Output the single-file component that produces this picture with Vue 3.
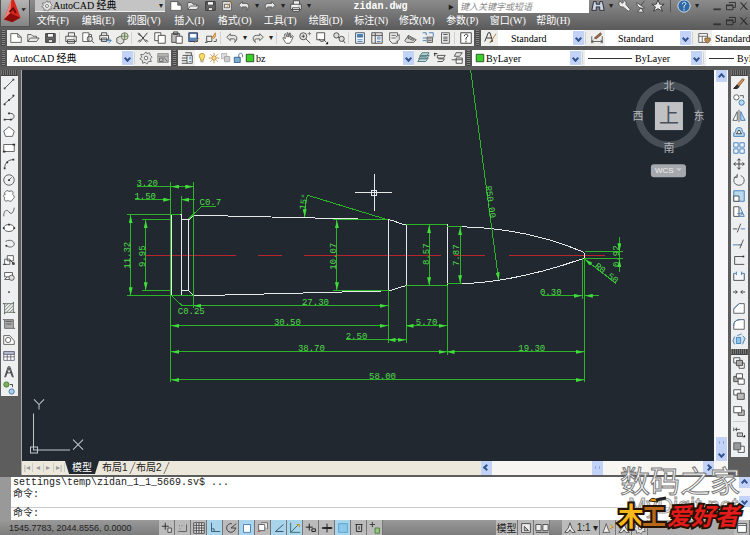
<script setup>
import { ref, h } from 'vue'

const blue = '#3f79b5'
const pale = '#b9d9ee'

// every icon is a list of [d, stroke, fill] on a 16x16 grid
const icons = {
  new: [['M2 3H10L14 7V13H2ZM10 3V7H14', '#555', '#fff']],
  open: [['M2 12V4H6L8 6H12V8M2 12L5 8H15L12 12Z', '#555', '#e8e8e8']],
  save: [['M3 3H14V13H3Z', '#333', '#666'], ['M5 3H12V7H5ZM6 10H11V13H6Z', '#333', '#fff']],
  edit: [['M3 3H13V13H3ZM5 6H11V10H5Z', '#555', '#eee'], ['M7 10L14 2', '#d08a20']],
  print: [['M5 6V2H12V6M2 6H14V12H2ZM4 10H12V14H4Z', '#444', '#f2f2f2'], ['M11 8H12', '#444']],
  preview: [['M2 2H9V12H2ZM9 4H12V7', '#555', '#fff'], ['M13 9A3 3 0 1 1 7 9A3 3 0 1 1 13 9M12 11L15 14', '#444']],
  publish: [['M4 5V2H10V5M2 5H12V10H2ZM4 8H10V12H4Z', '#444', '#eee'], ['M9 11H15M12 8L15 11L12 14', blue]],
  globe: [['M2 8L6 6L10 8V13L6 15L2 13Z', '#555', '#ddd'], ['M15 6A4 4 0 1 1 7 6A4 4 0 1 1 15 6M11 2V10M7 6H15', '#65755a', '#d3dfbf']],
  cut: [['M3 2L12 13M13 2L4 13M2 3L6 6', '#222'], ['M2 12L5 10M11 10L14 12', '#444']],
  copy: [['M2 2H9V11H2Z', '#444', '#fff'], ['M6 5H14V14H6Z', '#444', '#fff']],
  paste: [['M2 3H11V13H2ZM4 1H9V4H4Z', '#444', '#bbb'], ['M7 6H14V14H7Z', '#444', '#fff']],
  match: [['M2 2H12V12H2Z', '#335', '#5b86b8'], ['M4 4H10V7H4Z', '#fff', '#fff'], ['M8 14L14 8', '#c47b20']],
  block: [['M3 6H9V12H3ZM1 13H4M11 12H14V9', '#444', '#eee'], ['M9 8L13 2V6L11 9', '#c58432', '#e7b671']],
  undo: [['M6 3L2 7L6 11V9H10C12 9 12 11 11 13C15 10 14 5 10 5H6Z', '#555', '#e6e6e6']],
  redo: [['M10 3L14 7L10 11V9H6C4 9 4 11 5 13C1 10 2 5 6 5H10Z', '#555', '#e6e6e6']],
  pan: [['M5 13L2 8L3 7L5 9L4 4L5 3L7 7V2H8L9 7L10 2L11 3V8L13 5L14 6L12 11L10 14H6Z', '#555', '#fff']],
  zoom: [['M10 6A4 4 0 1 1 2 6A4 4 0 1 1 10 6M9 9L14 14M6 4V8M4 6H8', '#444', '#e8e8e8'], ['M11 3H15M13 1V5', '#777']],
  zoomWindow: [['M2 2H11V10H2Z', '#444', '#fff'], ['M11 9A3 3 0 1 1 5 9M10 10L13 13', '#444'], ['M12 15H15V12Z', 'none', '#111']],
  zoomPrev: [['M8 5A3 3 0 1 1 2 5A3 3 0 1 1 8 5M7 7L9 9', '#444', '#ddd'], ['M14 9A3 3 0 1 1 8 9A3 3 0 1 1 14 9M13 11L15 14', '#444', '#ddd']],
  props: [['M3 2H13V14H3Z', '#345', '#fff'], ['M5 4H11V7H5Z', blue, '#5278a4'], ['M5 10H11M5 12H11', blue]],
  center: [['M2 2H14V14H2ZM6 2V14M2 5H14', '#444', '#eee'], ['M8 7H12M8 9H12M8 12H12', blue]],
  palette: [['M3 2H12V14H6L3 11ZM5 5H10M5 8H10', '#555', '#eee'], ['M10 7L14 4V10L10 13', '#666', '#ddd']],
  sheet: [['M1 11L5 5L14 10L11 13H3Z', '#555', '#ddd'], ['M4 8L11 11M6 7L12 10M5 5V9', '#555']],
  markup: [['M2 2H6V5M9 2H14V7M2 8H7M2 11H6', blue], ['M7 7H13V13H7Z', '#444', '#e5e5e5'], ['M8 9H12M8 11H12', '#555']],
  calc: [['M4 2H13V14H4Z', '#555', '#eee'], ['M6 4H11M6 7H11M6 9H11M6 11H11', '#444']],
  help: [['M2 2H14V14H2Z', '#333', '#fff'], ['M6 6C6 3 11 3 10 6L8 8V10M8 11V13', '#222']],
  textStyle: [['M2 12L6 2H8L11 12M4 8H10', '#222'], ['M9 12L15 3', '#b57728'], ['M7 14L10 10L11 12Z', 'none', '#6d4724']],
  dimStyle: [['M2 6V14M14 6V14M2 12H14M4 10L2 12L4 14M12 10L14 12L12 14', '#555'], ['M5 8L12 2L13 4L7 9Z', '#754d35', '#996a48']],
  tableStyle: [['M2 3H12V13H2ZM2 6H12M6 6V13', '#555', '#fff'], ['M9 8H15V11L12 14L9 11Z', '#7d5a35', '#b78b55']],
  gear: [['M8 1L9 3L12 2L13 5L15 7L13 9L14 12L11 12L9 15L7 13L4 14L4 11L1 9L3 7L2 4L5 4Z', '#666', '#e3e3e3'], ['M10 8A2 2 0 1 1 6 8A2 2 0 1 1 10 8', '#666', '#fff']],
  workspace: [['M2 3H14V13H2ZM2 6H14', '#888', '#bbb'], ['M4 8H8V12H4ZM9 7L13 12', '#666']],
  layers: [['M6 2H13V5M3 5H9M2 8H8M2 11H8M2 14H8', '#444'], ['M8 5H14V14H8Z', '#444', '#fff'], ['M10 7H13M10 9H13M10 12H13', blue]],
  bulb: [['M8 2C3 2 4 7 6 9V11H10V9C12 7 13 2 8 2Z', '#a77e1d', '#f9dd68'], ['M6 13H10', '#666']],
  sun: [['M8 1V4M8 12V15M1 8H4M12 8H15M3 3L5 5M11 11L13 13M13 3L11 5M3 13L5 11', '#b27c29'], ['M11 8A3 3 0 1 1 5 8A3 3 0 1 1 11 8', '#a96b1f', '#ffe18c']],
  frozen: [['M2 2H9V9H2Z', '#aaa', '#ddd'], ['M6 6H13V13H6Z', '#999', '#ccc']],
  lock: [['M9 7V4C9 1 14 1 14 4V7', '#385a80'], ['M3 7H11V14H3Z', '#234b70', '#7cacd1']],
  green: [['M3 3H13V13H3Z', '#172b11', '#3ad02b']],
  layerA: [['M2 12L5 8H14L11 12ZM3 9L6 5H15L12 9ZM4 6L7 2H15L12 6Z', '#466f75', '#c2dcdf']],
  layerB: [['M5 5H14L12 8H5ZM6 9H13L11 12H5', '#444', '#eee'], ['M2 2V6M1 3H5', '#222']],
  layerC: [['M7 2H14L11 6H5ZM2 10H9', '#444', '#eee'], ['M7 8H14V14H7ZM7 10H14', '#444', '#fff']],
  line: [['M3 13L13 3', '#444'], ['M2 12H4V14H2ZM12 2H14V4H12Z', 'none', '#444']],
  xline: [['M2 13L14 3', '#444'], ['M2 12H4V14H2ZM7 7H9V9H7ZM12 2H14V4H12Z', 'none', '#333']],
  pline: [['M3 12H10C15 12 15 5 10 5H8', '#444'], ['M2 11H4V13H2ZM7 4H9V6H7ZM9 11H11V13H9Z', 'none', '#333']],
  polygon: [['M8 2L14 7L12 13H4L2 7Z', '#555', '#fff']],
  rect: [['M2 4H14V12H2Z', '#555', '#fff'], ['M1 11H4V13H1ZM12 3H15V5H12Z', 'none', '#333']],
  arc: [['M3 13C3 7 7 3 13 3', '#444'], ['M2 12H4V14H2ZM5 5H7V7H5ZM12 2H14V4H12Z', 'none', '#333']],
  circle: [['M14 8A6 6 0 1 1 2 8A6 6 0 1 1 14 8M8 8L11 5', '#555'], ['M7 7H9V9H7Z', 'none', '#333']],
  cloud: [['M4 3C6 1 8 2 8 3C11 1 14 3 12 6C15 8 14 11 12 12C11 15 8 14 7 13C4 15 2 13 3 10C1 8 2 6 4 6C2 5 3 4 4 3', '#555', '#fff']],
  spline: [['M2 13C2 5 6 5 8 8S13 10 14 3', '#555']],
  ellipse: [['M14 8A6 4 0 1 1 2 8A6 4 0 1 1 14 8', '#555', '#fff'], ['M1 7H3V9H1ZM7 3H9V5H7ZM13 7H15V9H13Z', 'none', '#333']],
  earc: [['M4 5C10 2 14 5 14 8C14 11 9 13 5 10', '#555'], ['M4 9H6V11H4Z', 'none', '#333']],
  insert: [['M6 3H13V9H6ZM3 7H9V13H3Z', '#555', '#fff'], ['M9 8L14 13M1 13H5M12 11H14V13H12Z', '#333']],
  make: [['M3 4H12V9H3ZM6 9L3 12H9', '#555', '#fff'], ['M14 10A3 3 0 1 1 8 10A3 3 0 1 1 14 10', '#555', '#ddd']],
  point: [['M7 7H9V9H7Z', 'none', '#555']],
  hatch: [['M3 3H13V13H3ZM3 7L7 3M3 11L11 3M5 13L13 5M9 13L13 9', '#667567'], ['M1 3H3M13 1V3M13 13H15M3 13V15', '#333']],
  gradient: [['M3 3H13V13H3Z', '#666', '#aaa'], ['M4 5H12M5 8H11M1 3H3M13 13H15', '#555']],
  region: [['M2 3H9L14 9V13H2Z', '#555', '#fff'], ['M10 8A3 3 0 1 1 4 8A3 3 0 1 1 10 8', '#555']],
  table: [['M2 3H14V13H2ZM2 6H14M2 9H14M6 3V13M10 3V13', '#667', '#fff'], ['M2 3H14V6H2Z', '#667', '#bcc8d8']],
  text: [['M3 14L7 2H9L13 14M5 9H11M4 14L8 3L12 14', '#333']],
  add: [['M8 4A3 3 0 1 1 2 4A3 3 0 1 1 8 4', '#427a35', '#7eae5e'], ['M14 12A3 3 0 1 1 8 12A3 3 0 1 1 14 12', '#426f97', '#a9d1ed'], ['M9 4H12V7', '#333']],
  erase: [['M2 13H6L14 3L12 2Z', '#88512d', '#d49760'], ['M2 13L6 9L8 11L6 13Z', '#222', '#333']],
  copyObj: [['M8 5A3 3 0 1 1 2 5A3 3 0 1 1 8 5', '#555', '#fff'], ['M14 11A3 3 0 1 1 8 11A3 3 0 1 1 14 11', blue, pale], ['M9 3H13V6', '#555']],
  mirror: [['M1 13L6 3V13Z', '#555', '#fff'], ['M15 13L10 3V13Z', blue, pale], ['M8 1V15', '#555']],
  offset: [['M2 9C6 9 2 3 8 3S10 9 14 9V13H2Z', blue, pale], ['M5 10C7 9 6 6 8 6S9 9 11 10Z', '#333', '#fff']],
  array: [['M2 2H7V7H2ZM9 2H14V7H9ZM2 9H7V14H2ZM9 9H14V14H9Z', blue, '#edf7fd']],
  move: [['M8 2V14M2 8H14M6 4L8 2L10 4M6 12L8 14L10 12M4 6L2 8L4 10M12 6L14 8L12 10', '#333']],
  rotate: [['M6 3C0 5 1 14 8 14S16 5 10 3M6 1V5H2', '#555']],
  scale: [['M2 2H14V14H2Z', blue, pale], ['M2 8H8V14H2Z', '#444', '#fff']],
  stretch: [['M2 2H8V13H2Z', '#444', '#fff'], ['M9 2L14 13H8M6 10H12L10 8M12 10L10 12', blue]],
  trim: [['M1 9H6M6 13L10 3', '#444'], ['M10 9H15', blue]],
  extend: [['M1 9H7', blue], ['M9 13L13 3M7 9H11', '#444']],
  breakAt: [['M13 4H3V13H14', '#444'], ['M12 3H14V5H12Z', 'none', '#333']],
  breakIt: [['M2 5V13H14V5', '#444', '#f5f9fc'], ['M2 5H5M11 5H14M5 3V7M11 3V7', blue]],
  join: [['M1 8H6M10 8H15M4 6L6 8L4 10M12 6L10 8L12 10', '#333']],
  chamfer: [['M2 14V9L8 3H14V14Z', '#555', '#fff'], ['M2 9L8 3', blue]],
  fillet: [['M2 14V10C2 5 5 3 10 3H14V14Z', '#555', '#fff'], ['M2 10C2 5 5 3 10 3', blue]],
  explode: [['M5 5H10V12H5Z', blue, '#8cc5e8'], ['M3 4L1 9L3 13M12 3L15 6L12 13M6 3L11 1', blue, pale]],
  orderA: [['M2 2H9V8H2ZM8 8H14V14H8Z', '#444', '#fff'], ['M5 5H12V11H5Z', '#444', '#aaa']],
  orderB: [['M2 5H9V11H2Z', '#444', '#aaa'], ['M5 2H12V7H5ZM7 8H14V14H7Z', '#444', '#fff']],
  orderC: [['M2 2H10V8H2Z', '#444', '#fff'], ['M6 6H14V13H6Z', '#444', '#bbb']],
  orderD: [['M7 7H14V13H7Z', '#444', '#bbb'], ['M2 3H11V10H2Z', '#444', '#fff']],
  orderE: [['M2 3V7M5 3V7M3 5H9M6 9H12V13H6Z', '#444', '#ccc'], ['M12 14H15V11Z', 'none', '#111']],
  orderF: [['M7 6H14V13H7Z', '#444', '#fff'], ['M2 2H10V10H2Z', '#555', '#999']],
  binoculars: [['M3 3H6V6H10V3H13L15 13H10V9H6V13H1Z', '#223', '#ccd5e2']],
  wrench: [['M3 2L6 5L8 3L6 1C10 1 11 4 10 6L15 12L13 14L7 9C3 10 1 6 3 2Z', '#555', '#eee']],
  dish: [['M3 4C3 9 8 12 12 10ZM8 7L12 2M8 10L4 15H11Z', '#444', '#eee']],
  star: [['M8 1L10 6H15L11 9L13 14L8 11L3 14L5 9L1 6H6Z', '#333', '#eee']],
  info: [['M15 8A7 7 0 1 1 1 8A7 7 0 1 1 15 8', '#dce8f4', '#2e69a7'], ['M6 6C6 3 11 3 10 6L8 8V10M8 11V13', '#fff']],
  min: [['M3 11H12M3 12H12', '#222']],
  restore: [['M6 3H14V9H11M3 6H11V12H3ZM3 7H11', '#222']],
  close: [['M4 3L12 12M12 3L4 12M5 3L13 12', '#222']],
  infer: [['M2 6H10M6 2V10', '#222'], ['M9 8H13V13H9Z', '#444', '#ddd']],
  snap: [['M4 12H12V4', '#555'], ['M2 12H4M4 5V6M7 5V6M4 9H5', '#666']],
  grid: [['M2 2H14V14H2ZM5 2V14M8 2V14M11 2V14M2 5H14M2 8H14M2 11H14', '#444', '#eee']],
  ortho: [['M4 2V12H14M4 9H7V12', '#356']],
  polar: [['M13 8A5 5 0 1 1 9 3M8 8L14 3M8 8H14', '#333']],
  osnap: [['M4 4H12V13H4Z', blue, '#fff']],
  osnap3: [['M3 4H10V11H3ZM6 2H13V9', '#555', '#fff'], ['M2 12H5', '#c44']],
  track: [['M13 4L4 12H13', '#345']],
  ducs: [['M3 2V13H14M3 13L12 4', '#366'], ['M10 4H13V7', '#b98d25', '#e7c34f']],
  dyn: [['M2 7H10M6 3V11M9 9H13V12H9Z', '#111']],
  weight: [['M2 8H14M8 3V13M8 8H14', '#111'], ['M3 7H13V9H3Z', 'none', '#222']],
  transp: [['M3 3H13V13H3Z', '#58a0cc', '#8cc8e9']],
  quick: [['M4 4H12M5 4V12H11V4M8 6V10', '#222']],
  cycle: [['M2 4H8M5 1V7', '#333'], ['M8 8H13V14H8Z', '#487b37', '#99c683']],
  layout: [['M3 3H13V13H3ZM6 6V11H11Z', '#444', '#eee']],
  views: [['M1 4H7V11H1ZM9 4H15V11H9ZM1 13H15', '#444', '#eee']],
  scaleA: [['M8 2L6 8L2 13H6L8 10L10 13H14L10 8Z', '#444', '#eee']],
  scaleB: [['M6 3L4 9L2 13H10L8 9Z', '#555', '#eee'], ['M11 4L14 7L10 9', '#b18325', '#efc761']],
  screen: [['M3 3H13V13H3ZM3 5H13', '#444', '#fff']]
}

const Icon = (props) =>
  h('svg', { class: 'icon', viewBox: '0 0 16 16', 'aria-hidden': 'true' },
    icons[props.name].map(([d, stroke, fill]) => h('path', { d, stroke, fill: fill || 'none' })))
Icon.props = ['name']

const menus = ['文件(F)', '编辑(E)', '视图(V)', '插入(I)', '格式(O)', '工具(T)', '绘图(D)', '标注(N)', '修改(M)', '参数(P)', '窗口(W)', '帮助(H)']
const quickTools = ['new', 'open', 'save', 'edit', 'undo', '>', 'redo', '>', 'print', '>']
const standardTools = [
  'new', 'open', 'save', '|', 'print', 'preview', 'publish', 'globe', '|',
  'cut', 'copy', 'paste', 'match', 'block', '|', 'undo', '>', 'redo', '>', '|',
  'pan', 'zoom', 'zoomWindow', 'zoomPrev', '|',
  'props', 'center', 'palette', 'sheet', 'markup', 'calc', '|', 'help'
]
const drawTools = ['line', 'xline', 'pline', 'polygon', 'rect', 'arc', 'circle', 'cloud', 'spline', 'ellipse', 'earc', 'insert', 'make', 'point', 'hatch', 'gradient', 'region', 'table', 'text', 'add']
const modifyTools = ['erase', 'copyObj', 'mirror', 'offset', 'array', 'move', 'rotate', 'scale', 'stretch', 'trim', 'extend', 'breakAt', 'breakIt', 'join', 'chamfer', 'fillet', 'explode']
const orderTools = ['orderA', 'orderB', 'orderC', 'orderD', '|', 'orderE', 'orderF']

const statusTools = ref([
  { name: 'infer', on: false }, { name: 'snap', on: false }, { name: 'grid', on: false },
  { name: 'ortho', on: true }, { name: 'polar', on: false }, { name: 'osnap', on: true },
  { name: 'osnap3', on: false }, { name: 'track', on: true }, { name: 'ducs', on: true },
  { name: 'dyn', on: false }, { name: 'weight', on: false }, { name: 'transp', on: true },
  { name: 'quick', on: false }, { name: 'cycle', on: false }
])

const tabs = ['模型', '布局1', '布局2']
const activeTab = ref('模型')
const command = ref('')

// dimension lines with an arrow at both ends
const dims = [
  'M171 186.5H193', 'M130.5 215V295', 'M145.5 220V290', 'M336.5 220V290',
  'M428.5 225V285', 'M459.5 227V283', 'M193 305.5H387', 'M171 325.5H387',
  'M405 325.5H446', 'M387 339.5H405', 'M171 351.5H446', 'M446 351.5H583', 'M171 379.5H583'
]
// arrow only at the end
const leaders = [
  'M135 199.5H171', 'M195 199.5H181', 'M470 70L498 280', 'M541 295.5H581',
  'M598 295.5H584', 'M618.5 237V251', 'M618.5 272V259', 'M615 283L584 259', 'M307 195Q304 205 304.5 217'
]
const extensions = [
  'M137 186.5H171', 'M170.5 182V382', 'M193.5 182V308', 'M181.5 196V214',
  'M127 214.5H180', 'M127 295.5H193', 'M142 219.5H171', 'M142 290.5H171',
  'M216 206.5H201L188 219', 'M171 295L182 305.5H193', 'M307 195L387 219.5',
  'M333 219.5H387', 'M333 290.5H387', 'M387.5 290V343', 'M405.5 285V343', 'M446.5 285V355',
  'M405 224.5H446', 'M405 285.5H446', 'M446 226.5H461', 'M446 283.5H461',
  'M346 339.5H387', 'M581.5 258V299', 'M583.5 258V382', 'M584 251.5H622', 'M584 258.5H622', 'M618.5 251V259'
]
const labels = [
  { t: '3.20', x: 147, y: 186 }, { t: '1.50', x: 145, y: 199 }, { t: 'C0.7', x: 210, y: 205 },
  { t: '27.30', x: 315, y: 305 }, { t: 'C0.25', x: 191, y: 314 }, { t: '30.50', x: 287, y: 325 },
  { t: '2.50', x: 356, y: 339 }, { t: '38.70', x: 311, y: 351 }, { t: '58.00', x: 382, y: 379 },
  { t: '5.70', x: 426, y: 325 }, { t: '19.30', x: 531, y: 351 }, { t: '0.30', x: 550, y: 295 },
  { t: '11.32', x: 130, y: 255, r: -90 }, { t: '9.95', x: 145, y: 256, r: -90 },
  { t: '10.07', x: 336, y: 256, r: -90 }, { t: '8.57', x: 428, y: 254, r: -90 },
  { t: '7.87', x: 458, y: 255, r: -90 }, { t: '0.92', x: 618, y: 256, r: -90 },
  { t: '15°', x: 306, y: 202, r: -80 }, { t: 'R50.00', x: 487, y: 202, r: 82 }, { t: 'R0.50', x: 604, y: 275, r: 38 }
]
</script>

<template>
  <div class="app">
    <header class="header">
      <button class="app-button" aria-label="应用程序菜单">
        <svg viewBox="0 0 30 28" class="app-logo">
          <path d="M3 21L11 0H14L21 19L12 16Z" fill="#d9261c" />
          <path d="M3 21L11 0L10 14Z" fill="#f08078" />
          <path d="M3 21L10 14L21 19L12 24Z" fill="#8e0d0b" />
          <path d="M9 13L13 9L16 14" fill="none" stroke="#6c0808" stroke-width="2" />
          <path d="M22 9H27L24 12Z" fill="#222" />
        </svg>
      </button>
      <div class="header-rows">
        <div class="title-row">
          <div class="combo title-combo">
            <Icon name="gear" />
            <select aria-label="工作空间"><option>AutoCAD 经典</option></select>
            <span class="caret">▾</span>
          </div>
          <template v-for="(tool, i) in quickTools" :key="i">
            <span v-if="tool === '>'" class="more">▾</span>
            <button v-else class="tool" :aria-label="tool"><Icon :name="tool" /></button>
          </template>
          <h1 class="title">zidan.dwg</h1>
          <span class="play">▶</span>
          <input class="search" aria-label="搜索" placeholder="键入关键字或短语" />
          <button class="tool" aria-label="搜索"><Icon name="binoculars" /></button>
          <span class="more">▾</span>
          <button class="tool" aria-label="速博"><Icon name="wrench" /></button>
          <button class="tool" aria-label="通讯中心"><Icon name="dish" /></button>
          <button class="tool" aria-label="收藏夹"><Icon name="star" /></button>
          <span class="sep dark"></span>
          <button class="tool" aria-label="帮助"><Icon name="info" /></button>
          <span class="more">▾</span>
          <div class="window-buttons">
            <button v-for="n in ['min', 'restore', 'close']" :key="n" :aria-label="n"><Icon :name="n" /></button>
          </div>
        </div>
        <div class="menu-row">
          <nav class="menus">
            <button v-for="menu in menus" :key="menu">{{ menu }}</button>
          </nav>
          <div class="window-buttons">
            <button v-for="n in ['min', 'restore', 'close']" :key="n" :aria-label="n"><Icon :name="n" /></button>
          </div>
        </div>
      </div>
    </header>

    <div class="toolbars">
      <div class="toolbar">
        <span class="grip"></span>
        <template v-for="(tool, i) in standardTools" :key="i">
          <span v-if="tool === '|'" class="sep"></span>
          <span v-else-if="tool === '>'" class="more">▾</span>
          <button v-else class="tool" :aria-label="tool"><Icon :name="tool" /></button>
        </template>
        <span class="grip"></span>
        <button class="tool" aria-label="文字样式"><Icon name="textStyle" /></button>
        <div class="combo style-combo">
          <select aria-label="文字样式"><option>Standard</option></select><span class="drop"></span>
        </div>
        <span class="sep"></span>
        <button class="tool" aria-label="标注样式"><Icon name="dimStyle" /></button>
        <div class="combo style-combo">
          <select aria-label="标注样式"><option>Standard</option></select><span class="drop"></span>
        </div>
        <span class="sep"></span>
        <button class="tool" aria-label="表格样式"><Icon name="tableStyle" /></button>
        <div class="combo rest">
          <select aria-label="表格样式"><option>Standard</option></select>
        </div>
      </div>

      <div class="toolbar">
        <span class="grip"></span>
        <div class="combo workspace-combo">
          <select aria-label="工作空间"><option>AutoCAD 经典</option></select><span class="drop"></span>
        </div>
        <span class="sep"></span>
        <button class="tool" aria-label="工作空间设置"><Icon name="gear" /></button>
        <button class="tool" aria-label="我的工作空间"><Icon name="workspace" /></button>
        <span class="grip"></span>
        <button class="tool" aria-label="图层特性"><Icon name="layers" /></button>
        <div class="combo layer-combo">
          <Icon v-for="n in ['bulb', 'sun', 'frozen', 'lock', 'green']" :key="n" :name="n" />
          <select aria-label="图层"><option>bz</option></select><span class="drop"></span>
        </div>
        <button v-for="n in ['layerA', 'layerB', 'layerC']" :key="n" class="tool" :aria-label="n"><Icon :name="n" /></button>
        <span class="grip"></span>
        <div class="combo color-combo">
          <Icon name="green" />
          <select aria-label="颜色"><option>ByLayer</option></select><span class="drop"></span>
        </div>
        <span class="sep"></span>
        <div class="combo type-combo">
          <span class="sample"></span>
          <select aria-label="线型"><option>ByLayer</option></select><span class="drop"></span>
        </div>
        <span class="sep"></span>
        <div class="combo rest">
          <span class="sample short"></span>
          <select aria-label="线宽"><option>ByLayer</option></select>
        </div>
      </div>
    </div>

    <main class="workspace">
      <aside class="side left">
        <span class="side-grip"></span>
        <div class="strip">
          <button v-for="tool in drawTools" :key="tool" :aria-label="tool"><Icon :name="tool" /></button>
        </div>
      </aside>

      <section class="document">
        <div class="view">
          <svg class="drawing" viewBox="22 70 691 390" role="img" aria-label="zidan.dwg">
            <defs>
              <marker id="arrow" viewBox="0 0 8 4" refX="8" refY="2" markerWidth="8" markerHeight="4" markerUnits="userSpaceOnUse" orient="auto-start-reverse">
                <path d="M0 0L8 2L0 4Z" fill="#3fdc3a" />
              </marker>
            </defs>
            <path class="axis" d="M146 255.5H236M258 255.5H282M304 255.5H440M453 255.5H484M508 255.5H604" />
            <g class="outline">
              <path d="M181 214.5H171.5V295.5H181M181.5 214V295M181 219.5H188.5V290.5H181M188.5 219.5L193.5 215V295.5L188.5 290.5" />
              <path d="M193.5 215L387.5 219.5V290.5L193.5 295.5" />
              <path d="M387.5 219.5C395 220 398 224 405.5 224.5V285.5C398 286 395 290 387.5 290.5M405.5 224.5H446.5V285.5H405.5" />
              <path d="M446.5 226.5H459Q528 228 583 252Q585 255 583 258Q515 282 459 283.5H446.5" />
            </g>
            <g class="dims">
              <path v-for="d in extensions" :key="d" :d="d" />
              <path v-for="d in dims" :key="d" :d="d" marker-start="url(#arrow)" marker-end="url(#arrow)" />
              <path v-for="d in leaders" :key="d" :d="d" marker-end="url(#arrow)" />
            </g>
            <text
              v-for="label in labels"
              :key="label.t"
              class="dim-text"
              :transform="`translate(${label.x} ${label.y}) rotate(${label.r || 0})`"
            >{{ label.t }}</text>
            <path class="cursor" d="M355 192.5H391M373.5 174V211M371 190H376V195H371Z" />
            <path class="ucs" d="M33.5 413V449.5H70M30.5 446.5H37.5V452.5H30.5ZM34 399L39 404L44 399M39 404V409M73 439L83 449M83 439L73 449" />
            <circle cx="668" cy="115" r="30" fill="none" stroke="#484e56" stroke-width="7" />
            <rect x="654" y="102" width="28" height="28" fill="#bfc1c5" />
            <text class="cube-top" x="668" y="123">上</text>
            <g class="compass">
              <text x="668" y="90">北</text>
              <text x="637" y="120">西</text>
              <text x="698" y="120">东</text>
              <text x="668" y="152">南</text>
            </g>
            <rect x="650" y="164" width="35" height="13" rx="3" fill="#a5a8ac" />
            <text class="wcs" x="654" y="173">WCS</text>
            <path d="M675 168L681 168L678 171Z" fill="#c8cace" />
          </svg>
          <div class="vscroll">
            <span class="scroll-button up"></span>
            <span class="track"></span>
            <span class="scroll-button thumb"></span>
            <span class="scroll-button down"></span>
          </div>
        </div>
        <div class="tab-row">
          <div class="tab-nav">
            <button aria-label="第一个">|◂</button><button aria-label="上一个">◂</button><button aria-label="下一个">▸</button><button aria-label="最后一个">▸|</button>
          </div>
          <button
            v-for="tab in tabs"
            :key="tab"
            :class="['tab', { active: tab === activeTab }]"
            @click="activeTab = tab"
          >{{ tab }}</button>
          <div class="hscroll">
            <span class="scroll-button prev"></span>
            <span class="scroll-button thumb"></span>
            <span class="scroll-button next"></span>
          </div>
        </div>
      </section>

      <aside class="side right">
        <span class="side-grip"></span>
        <div class="strip">
          <button v-for="tool in modifyTools" :key="tool" :aria-label="tool"><Icon :name="tool" /></button>
        </div>
        <span class="side-grip"></span>
        <div class="strip">
          <template v-for="tool in orderTools" :key="tool">
            <span v-if="tool === '|'" class="rule"></span>
            <button v-else :aria-label="tool"><Icon :name="tool" /></button>
          </template>
        </div>
      </aside>
    </main>

    <section class="command">
      <span class="command-grip"></span>
      <div class="command-body">
        <div class="history">
          <p>settings\temp\zidan_1_1_5669.sv$ ...</p>
          <p>命令:</p>
        </div>
        <div class="prompt">
          <label for="command">命令:</label>
          <input id="command" v-model="command" />
        </div>
      </div>
      <div class="command-scroll">
        <span class="scroll-button up"></span>
        <span class="scroll-button down"></span>
      </div>
    </section>

    <footer class="status">
      <span class="coords">1545.7783, 2044.8556, 0.0000</span>
      <div class="toggles">
        <button
          v-for="tool in statusTools"
          :key="tool.name"
          :class="{ on: tool.on }"
          :aria-label="tool.name"
          @click="tool.on = !tool.on"
        ><Icon :name="tool.name" /></button>
      </div>
      <div class="status-right">
        <button class="model">模型</button>
        <button aria-label="布局"><Icon name="layout" /></button>
        <button aria-label="快速查看"><Icon name="views" /></button>
        <span class="status-gap"></span>
        <button class="ratio"><Icon name="scaleA" />1:1 ▾</button>
        <button aria-label="注释可见性"><Icon name="scaleB" /></button>
        <button aria-label="自动添加比例"><Icon name="scaleA" /></button>
        <button aria-label="切换工作空间"><Icon name="gear" /></button>
        <span class="spacer"></span>
        <button aria-label="全屏显示"><Icon name="screen" /></button>
      </div>
    </footer>

    <svg class="watermark" viewBox="0 0 134 76">
      <text class="mark-name" x="4" y="32">数码之家</text>
      <text class="mark-site" x="12" y="53">MyDigit.net</text>
      <text class="mark-wood" x="2" y="66">木</text>
      <text class="mark-work" x="26" y="65">工</text>
      <path d="M33 41C36 36 41 39 42 42Z" fill="#e6a11b" stroke="#3a2206" />
      <path d="M40 40L50 38" stroke="#222" stroke-width="3" />
      <text class="mark-fan" x="51" y="65">爱好者</text>
    </svg>
  </div>
</template>

<style>
body {
  background: #5d5d5d;
}
</style>

<style scoped>
.app {
  position: relative;
  display: flex;
  flex-direction: column;
  min-height: 100vh;
  overflow: hidden;
  font-family: "Liberation Sans", "Noto Sans CJK SC", sans-serif;
  font-size: 10px;
  color: #222;
  background: #5d5d5d;
}
button {
  margin: 0;
  padding: 0;
  border: 0;
  background: none;
  font: inherit;
  color: inherit;
}
.icon {
  display: block;
  flex: none;
  width: 14px;
  height: 14px;
}
.header {
  display: flex;
  height: 30px;
  background: linear-gradient(#8c8c8c, #5a5a5a);
}
.app-button {
  width: 30px;
  height: 27px;
  border: 1px solid #555;
  border-top: 0;
  background: linear-gradient(#b4b4b4, #858585);
}
.app-logo {
  display: block;
  width: 28px;
  height: 26px;
}
.header-rows {
  flex: 1;
  min-width: 0;
}
.title-row {
  display: flex;
  align-items: center;
  height: 12px;
}
.title-combo {
  width: 130px;
  margin: 0 2px 0 5px;
  padding-left: 6px;
  border-bottom: 1px solid #eee;
}
.caret,
.more {
  width: 9px;
  font-size: 8px;
  line-height: 12px;
  text-align: center;
}
.title {
  flex: 1;
  margin: 0;
  font: bold 10px "Liberation Mono", monospace;
  color: #fff;
  text-align: center;
}
.play {
  width: 10px;
  font-size: 6px;
}
.search {
  box-sizing: border-box;
  width: 131px;
  height: 14px;
  padding: 0 2px;
  border: 0;
  background: #fff;
  font: italic 9px "Noto Sans CJK SC", sans-serif;
}
.search::placeholder {
  color: #888;
}
.menu-row {
  display: flex;
  align-items: center;
  height: 18px;
}
.menus {
  display: grid;
  grid-auto-flow: column;
  grid-auto-columns: 1fr;
  width: 546px;
}
.menus button {
  color: #fff;
  font-family: "Liberation Serif", "Noto Sans CJK SC", serif;
  line-height: 16px;
  white-space: nowrap;
}
.window-buttons {
  display: flex;
  margin-left: auto;
}
.title-row .window-buttons {
  margin-left: 10px;
}
.window-buttons .icon {
  width: 13px;
  height: 13px;
}
.toolbars {
  display: grid;
  gap: 4px;
  padding-bottom: 4px;
}
.toolbar {
  display: flex;
  align-items: center;
  height: 16px;
  min-width: 0;
  background: #eeeeec;
}
.tool {
  display: flex;
  flex: none;
  align-items: center;
  justify-content: center;
  width: 17px;
  height: 16px;
}
.sep {
  flex: none;
  width: 1px;
  height: 12px;
  margin: 0 2px 0 1px;
  background: #d2d2d2;
}
.sep.dark {
  background: #555;
  margin: 0 4px;
}
.grip {
  flex: none;
  width: 3px;
  height: 16px;
  border: 2px solid #555;
  border-width: 0 2px;
  background: repeating-linear-gradient(#888 0 1px, #444 1px 2px);
}
.combo {
  display: flex;
  flex: none;
  align-items: center;
  box-sizing: border-box;
  height: 16px;
  background: #fff;
}
.combo select {
  flex: 1;
  min-width: 0;
  height: 100%;
  padding: 0;
  border: 0;
  appearance: none;
  background: none;
  font: 10px "Liberation Serif", "Noto Sans CJK SC", serif;
  color: #000;
}
.combo .icon {
  width: 12px;
  height: 12px;
}
.combo.title-combo {
  height: 12px;
  background: #c4c4c4;
}
.drop,
.scroll-button {
  display: flex;
  flex: none;
  align-items: center;
  justify-content: center;
  width: 11px;
  height: 14px;
  background: #c3d3f7;
}
.drop::after,
.scroll-button::after {
  content: "";
  width: 3px;
  height: 3px;
  border: solid #34548f;
  border-width: 0 2px 2px 0;
  transform: rotate(45deg);
}
.scroll-button.up::after {
  transform: rotate(225deg);
}
.scroll-button.prev::after {
  transform: rotate(135deg);
}
.scroll-button.next::after {
  transform: rotate(-45deg);
}
.scroll-button.thumb::after {
  border-width: 0 1px;
  border-color: #8fa7dd;
  transform: none;
}
.style-combo {
  width: 86px;
  padding-left: 13px;
}
.rest {
  flex: 1;
  padding-left: 3px;
  overflow: hidden;
}
.workspace-combo {
  width: 126px;
  padding-left: 6px;
}
.layer-combo {
  width: 219px;
  padding-left: 1px;
}
.color-combo {
  width: 109px;
  padding-left: 2px;
}
.type-combo {
  width: 117px;
  padding-left: 3px;
}
.sample {
  flex: none;
  width: 44px;
  height: 1px;
  margin-right: 3px;
  background: #333;
}
.sample.short {
  width: 25px;
}
.workspace {
  display: flex;
  flex: 1;
  min-height: 300px;
}
.side {
  display: flex;
  flex: none;
  flex-direction: column;
  align-items: center;
}
.left {
  width: 18px;
  margin-right: 3px;
}
.right {
  width: 22px;
}
.side-grip {
  width: 16px;
  height: 6px;
  background: repeating-linear-gradient(90deg, #777 0 1px, #444 1px 2px);
  border-bottom: 1px solid #444;
  box-sizing: border-box;
}
.strip {
  width: 17px;
  background: #eeeff0;
}
.right .strip {
  padding-bottom: 1px;
}
.strip button {
  display: flex;
  align-items: center;
  justify-content: center;
  width: 17px;
  height: 16px;
}
.rule {
  display: block;
  height: 1px;
  margin: 2px;
  background: #ccc;
}
.document {
  display: flex;
  flex: 1;
  flex-direction: column;
  min-width: 0;
  margin-bottom: 2px;
  border-left: 1px solid #aaa;
}
.view {
  display: flex;
  flex: 1;
  min-height: 0;
  background: #212830;
}
.drawing {
  display: block;
  flex: 1;
  min-width: 0;
  height: 100%;
}
.axis {
  fill: none;
  stroke: #b8262c;
  shape-rendering: crispEdges;
}
.outline,
.cursor {
  fill: none;
  stroke: #e6e8ea;
  shape-rendering: crispEdges;
}
.ucs {
  fill: none;
  stroke: #c4c7ca;
}
.dims {
  fill: none;
  stroke: #2cb527;
  shape-rendering: crispEdges;
}
.dim-text {
  font: 9px "Liberation Mono", monospace;
  fill: #50d94a;
  text-anchor: middle;
}
.cube-top {
  font: 20px "Noto Sans CJK SC", sans-serif;
  fill: #4b5058;
  text-anchor: middle;
}
.compass {
  font: 11px "Noto Sans CJK SC", sans-serif;
  fill: #b4b7bb;
  text-anchor: middle;
}
.wcs {
  font: 8px "Liberation Sans", sans-serif;
  fill: #eee;
}
.vscroll {
  display: flex;
  flex-direction: column;
  align-items: center;
  width: 14px;
  background: #f8f8fa;
}
.vscroll .scroll-button {
  height: 12px;
}
.track {
  flex: 1;
}
.tab-row {
  display: flex;
  align-items: center;
  height: 14px;
  background: #ede8dc;
}
.tab-nav {
  display: flex;
  width: 43px;
  font-size: 8px;
  color: #999;
}
.tab-nav button {
  flex: 1;
  border-right: 1px solid #ccc;
}
.tab {
  display: flex;
  align-items: center;
  justify-content: space-between;
  width: 34px;
  height: 13px;
  padding-left: 3px;
  line-height: 13px;
  white-space: nowrap;
}
.tab::after {
  content: "";
  width: 1px;
  height: 12px;
  background: #777;
  transform: skewX(-24deg);
}
.tab.active {
  justify-content: center;
  padding: 0;
  color: #fff;
  background: #212830;
  clip-path: polygon(0 0, 100% 0, 88% 100%, 12% 100%);
}
.tab.active::after {
  display: none;
}
.hscroll {
  display: flex;
  justify-content: space-between;
  box-sizing: border-box;
  width: 35%;
  height: 14px;
  margin-left: auto;
  padding-right: 14px;
  background: #f7f6f3;
}
.command {
  display: flex;
  height: 43px;
  background: #fff;
  font: 10px "Liberation Mono", "Noto Sans CJK SC", monospace;
}
.command-grip {
  width: 11px;
  background: #999;
}
.command-body {
  flex: 1;
  min-width: 0;
}
.history {
  height: 30px;
  border-bottom: 1px solid #ccc;
}
.history p {
  margin: 0;
  padding-left: 2px;
  line-height: 12px;
}
.prompt {
  display: flex;
  padding-left: 2px;
  line-height: 12px;
}
.prompt input {
  flex: 1;
  height: 12px;
  padding: 0;
  border: 0;
  outline: 0;
  font: inherit;
}
.command-scroll {
  display: flex;
  flex-direction: column;
  justify-content: space-between;
  width: 11px;
  height: 30px;
  background: #f4f4f8;
}
.command-scroll .scroll-button {
  height: 11px;
}
.status {
  display: flex;
  align-items: center;
  height: 16px;
  background: linear-gradient(#999, #7b7b7b);
}
.status button {
  display: flex;
  align-items: center;
  justify-content: center;
  box-sizing: border-box;
  width: 16px;
  height: 16px;
  border-right: 1px solid #777;
  background: #bbb;
}
.status button.on {
  background: #a9d5ec;
}
.coords {
  width: 150px;
  padding-left: 9px;
  font-size: 9px;
}
.toggles {
  display: flex;
}
.status-right {
  display: flex;
  width: 254px;
  margin-left: auto;
}
.status .model {
  width: 22px;
}
.status-gap {
  width: 12px;
}
.status .ratio {
  width: 38px;
}
.spacer {
  flex: 1;
  background: #aaa;
}
.watermark {
  position: absolute;
  right: 0;
  bottom: 0;
  width: 134px;
  height: 76px;
  overflow: visible;
  pointer-events: none;
}
.mark-name {
  font: 30px "Noto Sans CJK SC", sans-serif;
  fill: #fff;
  stroke: #777;
  stroke-width: 1px;
}
.mark-site {
  font: 22px "Liberation Sans", sans-serif;
  fill: #fff;
  stroke: #999;
}
.mark-wood,
.mark-work,
.mark-fan {
  font: bold 24px "Noto Sans CJK SC", sans-serif;
  paint-order: stroke;
  stroke: #241204;
  stroke-width: 4px;
  fill: #f8b818;
}
.mark-wood {
  font-size: 26px;
}
.mark-work {
  fill: #b8681a;
}
.mark-fan {
  font-style: italic;
  fill: #e51a1a;
}
</style>
